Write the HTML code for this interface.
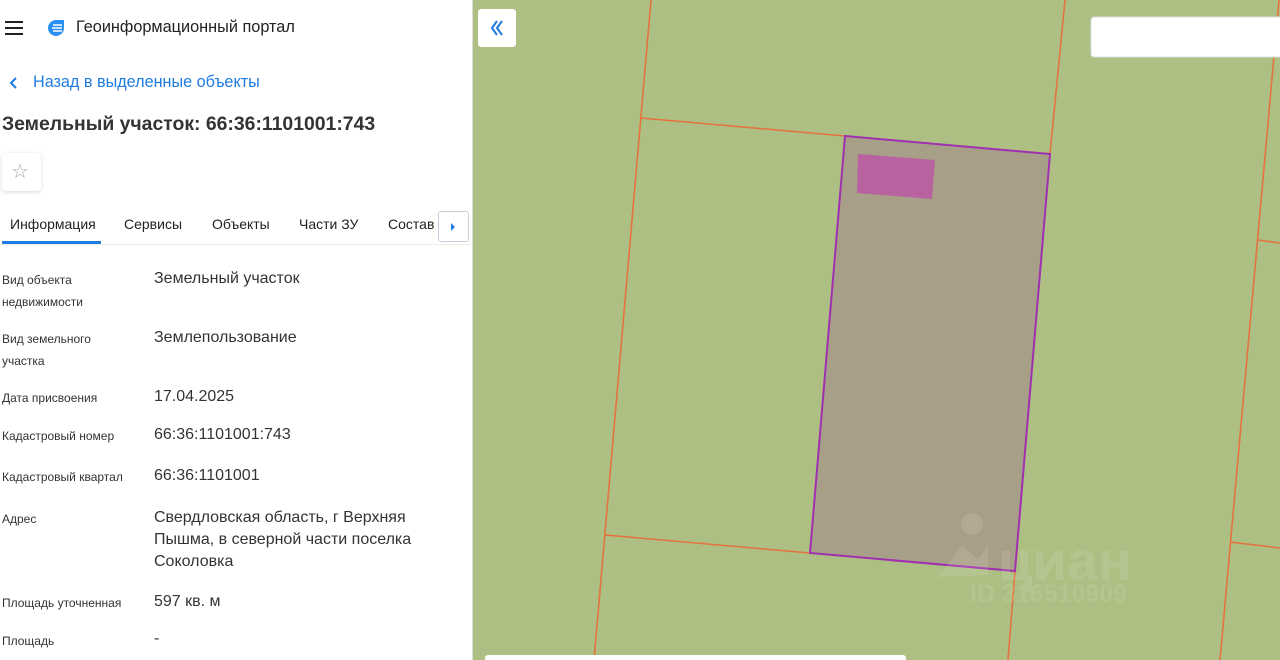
<!DOCTYPE html>
<html><head><meta charset="utf-8"><style>
*{margin:0;padding:0;box-sizing:border-box}
body{width:1280px;height:660px;overflow:hidden;background:#fff;font-family:"Liberation Sans","DejaVu Sans",sans-serif;position:relative}
.a{position:absolute;white-space:nowrap}
.l{font-size:12px;color:#333;line-height:22px}
.v{font-size:16px;color:#333;line-height:22px}
</style></head><body>
<div class="a" style="left:0;top:0;width:473px;height:660px;background:#fff;border-right:1px solid #ddd"></div>
<div class="a" style="left:5px;top:21px;width:18px;height:2px;background:#222"></div>
<div class="a" style="left:5px;top:27px;width:18px;height:2px;background:#222"></div>
<div class="a" style="left:5px;top:33px;width:18px;height:2px;background:#222"></div>
<svg class="a" style="left:47px;top:19px" width="18" height="18" viewBox="0 0 18 18"><path d="M9 1a8 8 0 1 0 8 8V1z" fill="#2a8ff0"/><path d="M6 6h9M5 9h10M6 12h9" stroke="#fff" stroke-width="1.6"/></svg>
<div class="a" style="left:76px;top:18px;font-size:16.3px;color:#222">Геоинформационный портал</div>
<svg class="a" style="left:8px;top:76px" width="10" height="14"><path d="M8 2L3 7l5 5" stroke="#1e7be0" stroke-width="2" fill="none"/></svg>
<div class="a" style="left:33px;top:73px;font-size:16.2px;color:#1e7be0">Назад в выделенные объекты</div>
<div class="a" style="left:2px;top:113px;font-size:19.4px;color:#333;font-weight:bold">Земельный участок: 66:36:1101001:743</div>
<div class="a" style="left:2px;top:153px;width:39px;height:38px;background:#fff;border-radius:4px;box-shadow:0 1px 4px rgba(0,0,0,.15)"></div>
<div class="a" style="left:11px;top:159px;font-size:20px;color:#aaa">☆</div>
<div class="a" style="left:10px;top:216px;font-size:14px;color:#222">Информация</div>
<div class="a" style="left:124px;top:216px;font-size:14px;color:#222">Сервисы</div>
<div class="a" style="left:212px;top:216px;font-size:14px;color:#222">Объекты</div>
<div class="a" style="left:299px;top:216px;font-size:14px;color:#222">Части ЗУ</div>
<div class="a" style="left:388px;top:216px;font-size:14px;color:#222">Состав</div>
<div class="a" style="left:438px;top:211px;width:31px;height:31px;border:1px solid #ccd;border-radius:3px;background:#fff"></div>
<div class="a" style="left:451px;top:223px;width:0;height:0;border-left:4px solid #1e7be0;border-top:4px solid transparent;border-bottom:4px solid transparent"></div>
<div class="a" style="left:2px;top:241px;width:99px;height:3px;background:#1e7be0"></div>
<div class="a" style="left:0;top:244px;width:470px;height:1px;background:#eee"></div>
<div class="a l" style="left:2px;top:269px">Вид объекта<br>недвижимости</div>
<div class="a v" style="left:154px;top:268px">Земельный участок</div>
<div class="a l" style="left:2px;top:328px">Вид земельного<br>участка</div>
<div class="a v" style="left:154px;top:327px">Землепользование</div>
<div class="a l" style="left:2px;top:387px">Дата присвоения</div>
<div class="a v" style="left:154px;top:386px">17.04.2025</div>
<div class="a l" style="left:2px;top:425px">Кадастровый номер</div>
<div class="a v" style="left:154px;top:424px">66:36:1101001:743</div>
<div class="a l" style="left:2px;top:466px">Кадастровый квартал</div>
<div class="a v" style="left:154px;top:465px">66:36:1101001</div>
<div class="a l" style="left:2px;top:508px">Адрес</div>
<div class="a v" style="left:154px;top:507px">Свердловская область, г Верхняя<br>Пышма, в северной части поселка<br>Соколовка</div>
<div class="a l" style="left:2px;top:592px">Площадь уточненная</div>
<div class="a v" style="left:154px;top:591px">597 кв. м</div>
<div class="a l" style="left:2px;top:630px">Площадь</div>
<div class="a v" style="left:154px;top:628px">-</div>
<svg class="a" style="left:473px;top:0" width="807" height="660" viewBox="473 0 807 660">
<rect x="473" y="0" width="807" height="660" fill="#adbf82"/>
<g stroke="#e5733f" stroke-width="1.6" fill="none">
<path d="M651 0L594 660"/>
<path d="M641 118L845 136"/>
<path d="M605 535L810 553"/>
<path d="M1065 0L1050 154M1015 571L1008 660"/>
<path d="M1279 0L1220 660"/>
<path d="M1258 240L1280 243M1230 542L1280 548"/>
</g>
<polygon points="845,136 1050,154 1015,571 810,553" fill="#a89f88" stroke="#a030b0" stroke-width="2"/>
<polygon points="858,154 935,160 932,199 857,193" fill="#b862a0"/>
<g fill="#fff" opacity=".1" font-family="Liberation Sans,sans-serif" font-weight="bold">
<text x="998" y="580" font-size="56">циан</text>
<text x="970" y="602" font-size="25">ID 316510909</text>
<circle cx="972" cy="524" r="11"/>
<path d="M938 577L962 545L978 560L988 545L988 575Z"/>
</g>
<rect x="478" y="9" width="38" height="38" rx="3" fill="#fff"/>
<path d="M497 21l-5 7 5 7M502 21l-5 7 5 7" stroke="#1e7be0" stroke-width="2" fill="none"/>
<rect x="1091" y="17" width="200" height="40" rx="3" fill="#fff" stroke="#ddd"/>
<rect x="485" y="655" width="421" height="10" rx="3" fill="#fff"/>
</svg>
</body></html>
